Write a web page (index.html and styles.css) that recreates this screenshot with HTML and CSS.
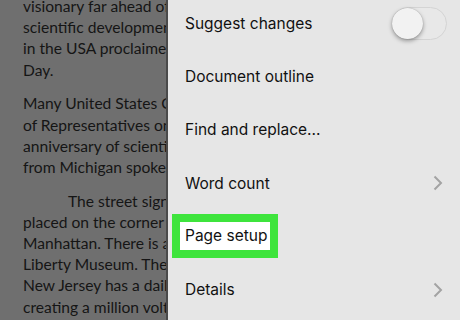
FILE: index.html
```html
<!DOCTYPE html>
<html lang="en">
<head>
    <meta charset="UTF-8">
    <title>Page setup</title>
    <link rel="stylesheet" href="styles.css">
</head>
<body>
    <div id="screen">
        <!-- document behind the menu, dimmed -->
        <div class="doc">
            <p>visionary far ahead of his<br>scientific development. C<br>in the USA proclaimed Nik<br>Day.</p>
            <p>Many United States Congr<br>of Representatives on the<br>anniversary of scientist, a<br>from Michigan spoke abou</p>
            <p class="indent">The street sign Nikola<br>placed on the corner of 4<br>Manhattan. There is a bu<br>Liberty Museum. The Lib<br>New Jersey has a daily sh<br>creating a million volts o</p>
        </div>
        <!-- menu -->
        <div class="panel">
            <ul class="menu">
                <li class="row">
                    <span>Suggest changes</span>
                    <span class="toggle"><span class="knob"></span></span>
                </li>
                <li class="row"><span>Document outline</span></li>
                <li class="row"><span>Find and replace...</span></li>
                <li class="row">
                    <span>Word count</span>
                    <svg class="chev" width="10" height="16" viewBox="0 0 10 16"><path d="M1.5 1.5 L8 8 L1.5 14.5" fill="none" stroke="#a3a3a3" stroke-width="2"/></svg>
                </li>
                <li class="row"><span class="mark">Page setup</span></li>
                <li class="row">
                    <span>Details</span>
                    <svg class="chev" width="10" height="16" viewBox="0 0 10 16"><path d="M1.5 1.5 L8 8 L1.5 14.5" fill="none" stroke="#a3a3a3" stroke-width="2"/></svg>
                </li>
            </ul>
        </div>
    </div>
</body>
</html>
```

FILE: styles.css
```css
*{
    margin: 0;
    padding: 0;
    list-style: none;
    box-sizing: border-box;
}
body{
    width: 460px;
    height: 320px;
    overflow: hidden;
    background: #e6e6e6;
}
#screen{
    display: flex;
    height: 320px;
}
.doc{
    width: 166px;
    flex-shrink: 0;
    overflow: hidden;
    background: #6f6f6f;
    color: #151515;
    font-family: Lato, "Open Sans", sans-serif;
    font-size: 15.6px;
    line-height: 21.2px;
    padding-left: 23px;
    margin-top: -4px;
    white-space: nowrap;
}
.doc p{
    margin-bottom: 12.5px;
}
.doc .indent{
    text-indent: 45px;
}
.panel{
    flex: 1;
    border-left: 2px solid #4a4a4a;
    background: #e6e6e6;
    font-family: Inter, "Liberation Sans", sans-serif;
    font-size: 15.5px;
    color: #111;
}
.menu{
    margin-top: -3px;
    padding-left: 17px;
    padding-right: 15px;
}
.row{
    height: 53.2px;
    display: flex;
    align-items: center;
    justify-content: space-between;
}
.toggle{
    width: 55px;
    height: 33px;
    border-radius: 17px;
    border: 1.5px solid #d4d4d4;
    background: #e8e8e8;
    display: flex;
    align-items: center;
    margin-right: -2px;
}
.knob{
    width: 31px;
    height: 31px;
    border-radius: 50%;
    background: #f2f2f2;
    margin-left: -1px;
    box-shadow: 0 2px 4px rgba(0,0,0,0.35), 0 0 1px rgba(0,0,0,0.3);
}
.chev{
    margin-right: 2px;
}
.mark{
    background: #fff;
    border: 8px solid #3ee43c;
    padding: 4px 3px 5px 5px;
    margin-left: -13px;
}
```
